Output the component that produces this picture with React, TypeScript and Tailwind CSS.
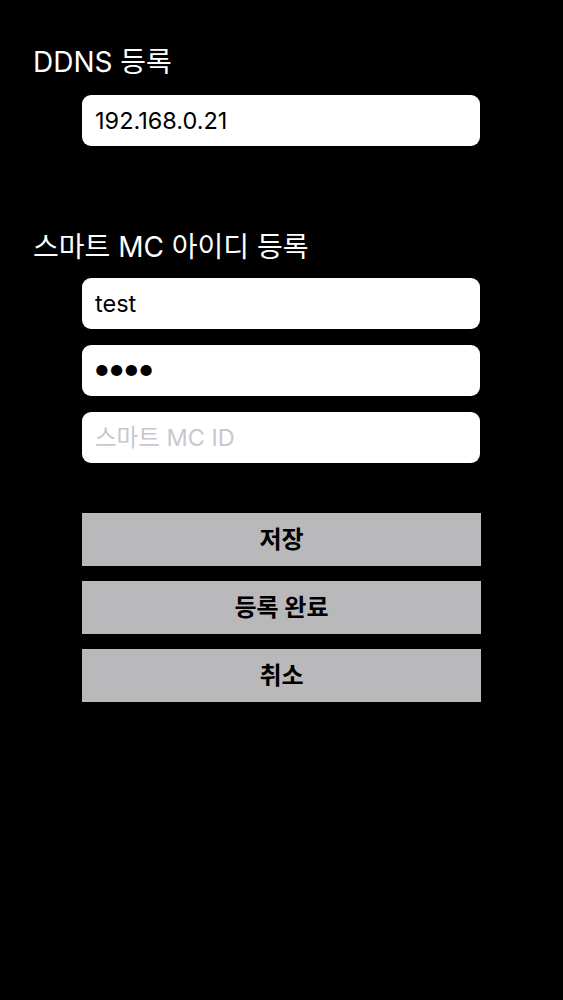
import React from 'react';

const font = { fontFamily: 'Inter, "Noto Sans CJK KR", sans-serif' };

function Field({ value, placeholder, dots }: { value?: string; placeholder?: string; dots?: boolean }) {
  return (
    <input
      readOnly
      value={value ?? ''}
      placeholder={placeholder}
      className={
        'h-[51px] w-[398px] rounded-[9px] bg-white px-[13px] text-black outline-none placeholder:text-[#c7c7cd] ' +
        (dots ? 'text-[15px] tracking-[1px]' : 'text-[23.5px]')
      }
    />
  );
}

function ActionButton({ label }: { label: string }) {
  return (
    <button className="h-[53px] w-[399px] bg-[#b9b8bb] text-[24px] font-bold text-black">
      {label}
    </button>
  );
}

export default function App() {
  return (
    <div className="min-h-[1000px] bg-black text-white" style={font}>
      <div className="flex flex-col pl-[33px] pt-[45px]">
        <h2 className="text-[28px] leading-[34px]">DDNS 등록</h2>
        <div className="ml-[49px] mt-[16px]">
          <Field value="192.168.0.21" />
        </div>

        <h2 className="mt-[84px] text-[28px] leading-[34px]">스마트 MC 아이디 등록</h2>
        <div className="ml-[49px] mt-[14px] flex flex-col gap-[16px]">
          <Field value="test" />
          <Field value="●●●●" dots />
          <Field placeholder="스마트 MC ID" />
        </div>

        <div className="ml-[49px] mt-[50px] flex flex-col gap-[15px]">
          <ActionButton label="저장" />
          <ActionButton label="등록 완료" />
          <ActionButton label="취소" />
        </div>
      </div>
    </div>
  );
}
